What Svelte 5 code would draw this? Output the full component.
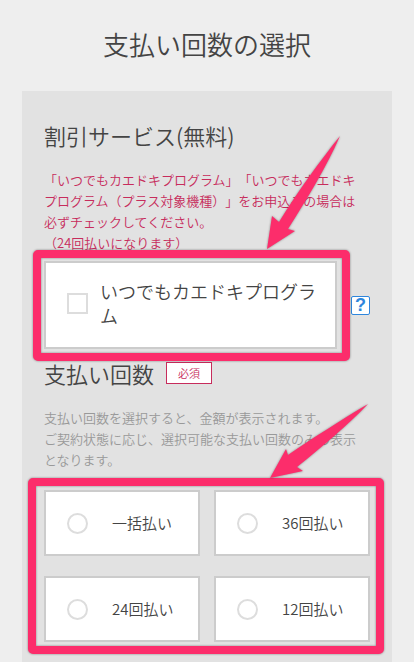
<script lang="ts">
  const payments = [
    { value: "once", label: "一括払い" },
    { value: "36", label: "36回払い" },
    { value: "24", label: "24回払い" },
    { value: "12", label: "12回払い" },
  ];

  let program = $state(false);
  let payment = $state("");
</script>

<main>
  <h1>支払い回数の選択</h1>

  <div class="panel">
    <section>
      <h2>割引サービス(無料)</h2>
      <p class="note alert">
        「いつでもカエドキプログラム」「いつでもカエドキプログラム（プラス対象機種）」をお申込みの場合は必ずチェックしてください。<br
        />（24回払いになります）
      </p>
      <div class="service">
        <div class="marked">
          <label class="card program">
            <input type="checkbox" bind:checked={program} />
            <span>いつでもカエドキプログラム</span>
          </label>
          <div class="frame"></div>
          <svg class="arrow steep" viewBox="0 0 74 114" aria-hidden="true">
            <path d="M73 0 C53 25 31 55 12 86 L5 80 L0 113 L28 95 L21 93 C40 63 59 32 73 0Z" />
          </svg>
        </div>
        <button class="help" type="button" aria-label="ヘルプ">?</button>
      </div>
    </section>

    <section>
      <div class="title">
        <h2 id="payment-title">支払い回数</h2>
        <span class="badge">必須</span>
      </div>
      <p class="note">
        支払い回数を選択すると、金額が表示されます。<br
        />ご契約状態に応じ、選択可能な支払い回数のみの表示となります。
      </p>
      <div class="marked wide">
        <div class="options" role="radiogroup" aria-labelledby="payment-title">
          {#each payments as item}
            <label class="card option">
              <input type="radio" name="payment" value={item.value} bind:group={payment} />
              <span>{item.label}</span>
            </label>
          {/each}
        </div>
        <div class="frame"></div>
        <svg class="arrow flat" viewBox="0 0 98 75" aria-hidden="true">
          <path d="M98 0 C71 16 43 34 18 51 L16 45 L0 74 L33 67 L27 63 C52 43 77 22 98 0Z" />
        </svg>
      </div>
    </section>
  </div>
</main>

<style>
  :global(body) {
    margin: 0;
    background: #eeeeee;
  }

  main {
    box-sizing: border-box;
    display: flex;
    flex-direction: column;
    min-height: 100vh;
    padding: 26px 22px 0;
    color: #444444;
    font-family: "Noto Sans CJK JP", sans-serif;
    font-weight: 350;
    text-spacing-trim: space-all;
  }

  h1,
  h2,
  p {
    margin: 0;
    font-weight: 350;
  }

  h1 {
    margin-bottom: 29px;
    font-size: 26px;
    line-height: 36px;
    text-align: center;
  }

  h2 {
    font-size: 22px;
    line-height: 32px;
  }

  .panel {
    flex: 1;
    display: flex;
    flex-direction: column;
    gap: 8px;
    padding: 28px 22px 18px;
    background: #e2e2e2;
  }

  .note {
    margin-top: 18px;
    padding-right: 8px;
    color: #999999;
    font-size: 13px;
    line-height: 21px;
  }

  .alert {
    color: #c72c5c;
  }

  .service {
    display: flex;
    align-items: center;
    gap: 14px;
    margin-top: 8px;
  }

  .marked {
    position: relative;
    flex: 1;
  }

  .wide {
    margin-top: 20px;
  }

  .card {
    box-sizing: border-box;
    display: flex;
    align-items: center;
    border: 2px solid #cccccc;
    background: #ffffff;
    cursor: pointer;
  }

  .program {
    gap: 12px;
    min-height: 88px;
    padding: 16px 16px 20px 21px;
    font-size: 18px;
    line-height: 24px;
  }

  .option {
    gap: 24px;
    min-height: 66px;
    padding: 8px 8px 8px 21px;
    font-size: 15px;
    line-height: 24px;
  }

  input {
    appearance: none;
    box-sizing: border-box;
    flex: none;
    width: 21px;
    height: 21px;
    margin: 0;
    border: 2px solid #dddddd;
    background: #ffffff;
  }

  input[type="radio"] {
    border-radius: 50%;
  }

  input:checked {
    border-color: #c72c5c;
    background: #c72c5c;
  }

  .help {
    box-sizing: border-box;
    width: 19px;
    height: 19px;
    padding: 0;
    border: 1px solid #2f86dc;
    border-radius: 2px;
    background: #ffffff;
    color: #2f86dc;
    font-family: "Liberation Sans", sans-serif;
    font-size: 18px;
    font-weight: 700;
    line-height: 17px;
    cursor: pointer;
  }

  .title {
    display: flex;
    align-items: center;
    gap: 12px;
  }

  .badge {
    padding: 0 11px;
    border: 1px solid #c72c5c;
    background: #ffffff;
    color: #c72c5c;
    font-size: 11px;
    line-height: 20px;
  }

  .options {
    display: grid;
    grid-template-columns: 1fr 1fr;
    gap: 20px 14px;
  }

  /* pink guide marks laid over the form */
  .frame {
    position: absolute;
    inset: -11px -13px -12px -11px;
    border: 8px solid #fc2d6b;
    border-radius: 5px;
    filter: drop-shadow(0 0 1px rgba(0, 0, 0, 0.4));
    pointer-events: none;
  }

  .wide .frame {
    inset: -12px -14px -12px -16px;
  }

  .arrow {
    position: absolute;
    bottom: calc(100% + 11px);
    fill: #fc2d6b;
    filter: drop-shadow(0 0 1px rgba(0, 0, 0, 0.4));
    pointer-events: none;
  }

  .steep {
    right: -4px;
    width: 74px;
    height: 114px;
  }

  .flat {
    right: 2px;
    width: 98px;
    height: 75px;
  }
</style>
